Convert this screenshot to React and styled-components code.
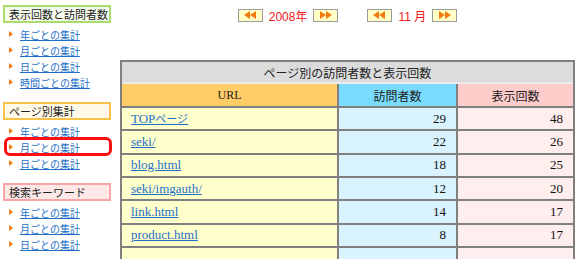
import React from "react";
import styled, { createGlobalStyle } from "styled-components";

const Global = createGlobalStyle`
  html, body { margin: 0; padding: 0; background: #fff; }
  body { font-family: "Noto Sans CJK JP", "Liberation Sans", sans-serif; }
`;

const Page = styled.div`
  display: flex;
  width: 580px;
  height: 259px;
  overflow: hidden;
`;

const Sidebar = styled.nav`
  width: 114px;
  flex: none;
  padding-top: 5px;
  box-sizing: border-box;
`;

const Section = styled.section`
  margin-top: ${(p) => (p.$first ? 0 : 12)}px;
`;

const SectionTitle = styled.div`
  margin-left: 3px;
  width: 108px;
  height: 18px;
  box-sizing: border-box;
  border: 2px solid ${(p) => p.$border};
  background: ${(p) => p.$bg};
  padding-left: 4px;
  display: flex;
  align-items: center;
  font-size: 11px;
  color: #222;
  white-space: nowrap;
`;

const LinkList = styled.ul`
  list-style: none;
  margin: 3px 0 0;
  padding: 0;
`;

const LinkItem = styled.li`
  position: relative;
  height: 16px;
  display: flex;
  align-items: center;
  padding-left: 9px;
  &::after {
    content: "";
    display: ${(p) => (p.$marked ? "block" : "none")};
    position: absolute;
    left: 4px;
    right: 2px;
    top: -2px;
    bottom: -1px;
    border: 3px solid #ff1010;
    border-radius: 6px;
  }
`;

const Bullet = styled.span`
  width: 0;
  height: 0;
  border-top: 3.5px solid transparent;
  border-bottom: 3.5px solid transparent;
  border-left: 4px solid #f47a10;
  margin-right: 7px;
`;

const SideLink = styled.a`
  font-size: 10px;
  color: #1f6fc8;
  text-decoration: underline;
  white-space: nowrap;
`;

const Main = styled.main`
  width: 455px;
  margin-left: 6px;
  padding-top: 8px;
  display: flex;
  flex-direction: column;
`;

const Nav = styled.div`
  height: 14px;
  display: flex;
  align-items: center;
  justify-content: center;
  gap: 5px;
`;

const NavGroup = styled.div`
  display: flex;
  align-items: center;
  gap: 6px;
  margin: 0 12px;
`;

const NavButton = styled.button`
  width: 25px;
  height: 13px;
  padding: 0;
  border: 1px solid #9a9a9a;
  background: #ffffc6;
  display: flex;
  align-items: center;
  justify-content: center;
  cursor: pointer;
`;

const NavLabel = styled.span`
  font-size: 12px;
  color: #f01818;
  font-family: "Liberation Sans", "Noto Sans CJK JP", sans-serif;
  white-space: nowrap;
`;

const Arrows = ({ dir }) => (
  <svg width="13" height="8" viewBox="0 0 13 8">
    {dir === "left" ? (
      <>
        <polygon points="0,4 6,0 6,8" fill="#f47a10" />
        <polygon points="6,4 12,0 12,8" fill="#f47a10" />
      </>
    ) : (
      <>
        <polygon points="1,0 7,4 1,8" fill="#f47a10" />
        <polygon points="7,0 13,4 7,8" fill="#f47a10" />
      </>
    )}
  </svg>
);

const Table = styled.div`
  margin-top: 38px;
  border: 2px solid #808080;
  background: #808080;
  box-sizing: border-box;
  width: 455px;
`;

const TableTitle = styled.div`
  height: 20px;
  background: #dcdcdc;
  border-bottom: 2px solid #ececec;
  display: flex;
  align-items: center;
  justify-content: center;
  font-size: 12px;
  color: #222;
`;

const Grid = styled.div`
  display: grid;
  grid-template-columns: 215px 117px 115px;
  grid-template-rows: 22px;
  grid-auto-rows: 21.33px;
  gap: 2px;
`;

const HeadCell = styled.div`
  background: ${(p) => p.$bg};
  display: flex;
  align-items: center;
  justify-content: center;
  font-size: 12px;
  color: #222;
  font-family: ${(p) =>
    p.$serif
      ? `"Liberation Serif", serif`
      : `"Noto Sans CJK JP", sans-serif`};
`;

const Cell = styled.div`
  background: ${(p) => p.$bg};
  display: flex;
  align-items: center;
  justify-content: ${(p) => (p.$num ? "flex-end" : "flex-start")};
  padding: ${(p) => (p.$num ? "0 10px 0 0" : "0 0 0 9px")};
  font-family: "Liberation Serif", "Noto Sans CJK JP", serif;
  font-size: 13px;
  color: #111;
`;

const UrlLink = styled.a`
  color: #1f6fc8;
  text-decoration: underline;
  white-space: nowrap;
`;

const Jp = styled.span`
  font-family: "Noto Sans CJK JP", sans-serif;
  font-size: 11px;
`;

const sections = [
  {
    title: "表示回数と訪問者数",
    border: "#a9dc6a",
    bg: "#f6fbee",
    links: ["年ごとの集計", "月ごとの集計", "日ごとの集計", "時間ごとの集計"],
  },
  {
    title: "ページ別集計",
    border: "#f7c24a",
    bg: "#fffbe8",
    links: ["年ごとの集計", "月ごとの集計", "日ごとの集計"],
    marked: 1,
  },
  {
    title: "検索キーワード",
    border: "#f6a6a6",
    bg: "#ffe8e8",
    links: ["年ごとの集計", "月ごとの集計", "日ごとの集計"],
  },
];

const rows = [
  { url: "TOP", jp: "ページ", v: 29, p: 48 },
  { url: "seki/", v: 22, p: 26 },
  { url: "blog.html", v: 18, p: 25 },
  { url: "seki/imgauth/", v: 12, p: 20 },
  { url: "link.html", v: 14, p: 17 },
  { url: "product.html", v: 8, p: 17 },
  { url: "", v: "", p: "" },
];

export default function App() {
  return (
    <>
      <Global />
      <Page>
        <Sidebar>
          {sections.map((s, i) => (
            <Section key={s.title} $first={i === 0}>
              <SectionTitle $border={s.border} $bg={s.bg}>
                {s.title}
              </SectionTitle>
              <LinkList>
                {s.links.map((l, j) => (
                  <LinkItem key={l} $marked={s.marked === j}>
                    <Bullet />
                    <SideLink href="#">{l}</SideLink>
                  </LinkItem>
                ))}
              </LinkList>
            </Section>
          ))}
        </Sidebar>
        <Main>
          <Nav>
            <NavGroup>
              <NavButton aria-label="前の年">
                <Arrows dir="left" />
              </NavButton>
              <NavLabel>2008年</NavLabel>
              <NavButton aria-label="次の年">
                <Arrows dir="right" />
              </NavButton>
            </NavGroup>
            <NavGroup>
              <NavButton aria-label="前の月">
                <Arrows dir="left" />
              </NavButton>
              <NavLabel>11 月</NavLabel>
              <NavButton aria-label="次の月">
                <Arrows dir="right" />
              </NavButton>
            </NavGroup>
          </Nav>
          <Table>
            <TableTitle>ページ別の訪問者数と表示回数</TableTitle>
            <Grid>
              <HeadCell $bg="#ffcc66" $serif>
                URL
              </HeadCell>
              <HeadCell $bg="#79dcff">訪問者数</HeadCell>
              <HeadCell $bg="#ffcccc">表示回数</HeadCell>
              {rows.map((r, i) => (
                <React.Fragment key={i}>
                  <Cell $bg="#ffffcc">
                    {r.url && (
                      <UrlLink href="#">
                        {r.url}
                        {r.jp && <Jp>{r.jp}</Jp>}
                      </UrlLink>
                    )}
                  </Cell>
                  <Cell $bg="#d9f3ff" $num>
                    {r.v}
                  </Cell>
                  <Cell $bg="#ffeeee" $num>
                    {r.p}
                  </Cell>
                </React.Fragment>
              ))}
            </Grid>
          </Table>
        </Main>
      </Page>
    </>
  );
}
